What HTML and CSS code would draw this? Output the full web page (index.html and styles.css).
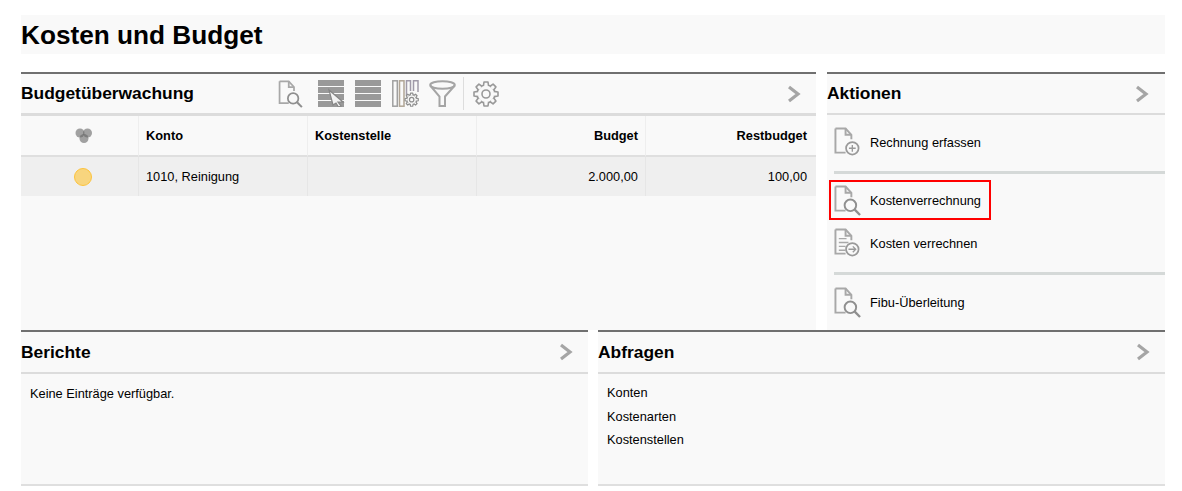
FILE: index.html
```html
<!DOCTYPE html>
<html lang="de">
<head>
<meta charset="utf-8">
<title>Kosten und Budget</title>
<link rel="stylesheet" href="styles.css">
</head>
<body>
<svg class="defs" width="0" height="0" aria-hidden="true">
  <defs>
    <g id="doc"><path d="M1.500 1.500H12L18 8V12.500M1.500 1.500V26.500H12" fill="none" stroke="#a8a8a8" stroke-width="2"/><path d="M12 1.500V8H18" fill="none" stroke="#a8a8a8" stroke-width="2"/></g>
    <g id="docfind"><use href="#doc"/><circle cx="17" cy="21" r="6" fill="#f9f9f9" stroke="#8f8f8f" stroke-width="2"/><path d="M21.500 25.500L27 31" stroke="#8f8f8f" stroke-width="2.400"/></g>
    <symbol id="chev" viewBox="0 0 14 18"><path d="M2 2L11 9L2 16" fill="none" stroke="#a5a5a5" stroke-width="3.200"/></symbol>
    <path id="tooth" d="M10.400 5L11 1H15L15.600 5" fill="#f9f9f9"/>
    <g id="cog" fill="none" stroke-linejoin="round">
      <circle cx="13" cy="13" r="9"/>
      <use href="#tooth"/>
      <use href="#tooth" transform="rotate(45 13 13)"/>
      <use href="#tooth" transform="rotate(90 13 13)"/>
      <use href="#tooth" transform="rotate(135 13 13)"/>
      <use href="#tooth" transform="rotate(180 13 13)"/>
      <use href="#tooth" transform="rotate(225 13 13)"/>
      <use href="#tooth" transform="rotate(270 13 13)"/>
      <use href="#tooth" transform="rotate(315 13 13)"/>
      <circle cx="13" cy="13" r="4"/>
    </g>
    <g id="bands" fill="#999"><rect y="0" width="26" height="6"/><rect y="7" width="26" height="6"/><rect y="14" width="26" height="6"/><rect y="21" width="26" height="6"/></g>
  </defs>
</svg>
<h1 class="page-title">Kosten und Budget</h1>
<main class="board">
  <section class="panel budget">
    <header class="panel-head head-thick">
      <h2>Budgetüberwachung</h2>
      <div class="tools">
        <svg class="ic doc-tool" width="25" height="28" viewBox="0 0 28 32"><use href="#docfind"/></svg>
        <svg class="ic rows-a" width="27" height="27" viewBox="0 0 27 27"><use href="#bands"/><path d="M11 10L25 22L20 22L23 26L20.500 27L18 23L15 25Z" fill="#f2f2f2" stroke="#858585" stroke-width="1.200"/></svg>
        <svg class="ic rows-b" width="27" height="27" viewBox="0 0 27 27"><use href="#bands"/></svg>
        <svg class="ic cols" width="27" height="27" viewBox="0 0 27 27"><g fill="none" stroke-width="1.500"><rect x=".800" y=".800" width="4.500" height="25.400" stroke="#a0a0a0"/><rect x="7.500" y=".800" width="4.500" height="25.400" stroke="#b0a595"/><path d="M14.500 15V.800H18.500V11M21.500 11V.800H26V12" stroke="#a09aa8"/></g><use href="#cog" stroke="#8f8f8f" stroke-width="2.200" transform="translate(12.500 12.500) scale(.55)"/></svg>
        <svg class="ic funnel" width="27" height="27" viewBox="0 0 27 27"><ellipse cx="13.500" cy="5" rx="12.300" ry="3.800" fill="none" stroke="#a5a5a5" stroke-width="2"/><path d="M1.200 5.500L10.500 16.500V26H16V16.500L25.800 5.500" fill="none" stroke="#a5a5a5" stroke-width="2"/></svg>
        <span class="tool-sep"></span>
        <svg class="ic gear" width="26" height="26" viewBox="0 0 26 26"><use href="#cog" stroke="#999" stroke-width="1.600"/></svg>
      </div>
      <svg class="chev" width="14" height="18"><use href="#chev"/></svg>
    </header>
    <div class="grid-table">
      <div class="cell th status"><svg width="18" height="16" viewBox="0 0 18 16"><g fill="#666" fill-opacity=".6"><circle cx="5" cy="5" r="4.500"/><circle cx="12.500" cy="5" r="4.500"/><circle cx="9" cy="10.500" r="4.500"/></g></svg></div>
      <div class="cell th">Konto</div>
      <div class="cell th">Kostenstelle</div>
      <div class="cell th num">Budget</div>
      <div class="cell th num last">Restbudget</div>
      <div class="cell td status"><span class="dot"></span></div>
      <div class="cell td">1010, Reinigung</div>
      <div class="cell td"></div>
      <div class="cell td num">2.000,00</div>
      <div class="cell td num last">100,00</div>
    </div>
  </section>

  <section class="panel actions">
    <header class="panel-head">
      <h2>Aktionen</h2>
      <svg class="chev" width="14" height="18"><use href="#chev"/></svg>
    </header>
    <ul class="action-list">
      <li class="action"><svg width="27" height="31" viewBox="0 0 28 32"><use href="#doc"/><circle cx="19" cy="22" r="6.500" fill="#f9f9f9" stroke="#9a9a9a" stroke-width="1.800"/><path d="M15.500 22H22.500M19 18.500V25.500" stroke="#9a9a9a" stroke-width="1.400"/></svg><span>Rechnung erfassen</span></li>
      <li class="rule"></li>
      <li class="action boxed"><svg width="27" height="31" viewBox="0 0 28 32"><use href="#docfind"/></svg><span>Kostenverrechnung</span></li>
      <li class="action"><svg width="27" height="31" viewBox="0 0 28 32"><use href="#doc"/><path d="M5 11H13M5 15H15M5 19H12M5 23H12" stroke="#a8a8a8" stroke-width="1.400"/><circle cx="19" cy="22" r="6.500" fill="#f9f9f9" stroke="#9a9a9a" stroke-width="1.800"/><path d="M15 22H22M19.500 19L22.500 22L19.500 25" fill="none" stroke="#9a9a9a" stroke-width="1.400"/></svg><span>Kosten verrechnen</span></li>
      <li class="rule rule-b"></li>
      <li class="action"><svg width="27" height="31" viewBox="0 0 28 32"><use href="#docfind"/></svg><span>Fibu-Überleitung</span></li>
    </ul>
  </section>

  <div class="lower">
    <section class="panel">
      <header class="panel-head">
        <h2>Berichte</h2>
        <svg class="chev" width="14" height="18"><use href="#chev"/></svg>
      </header>
      <p class="empty">Keine Einträge verfügbar.</p>
    </section>
    <section class="panel">
      <header class="panel-head">
        <h2>Abfragen</h2>
        <svg class="chev" width="14" height="18"><use href="#chev"/></svg>
      </header>
      <ul class="links">
        <li>Konten</li>
        <li>Kostenarten</li>
        <li>Kostenstellen</li>
      </ul>
    </section>
  </div>
</main>
</body>
</html>
```
FILE: styles.css
```css
* { box-sizing: border-box; }
html, body { margin: 0; background: #fff; }
body {
  padding: 15px 17px 0 21px;
  font-family: "Liberation Sans", Arial, sans-serif;
  font-size: 12.8px;
  color: #000;
  height: 491px;
  overflow: hidden;
}
.defs { position: absolute; }
.page-title {
  margin: 0 0 18px;
  height: 39px;
  background: #f9f9f9;
  font-size: 26.2px;
  line-height: 41px;
  font-weight: bold;
}
.board {
  display: grid;
  grid-template-columns: 795px 338px;
  column-gap: 11px;
  grid-template-rows: 258px 156px;
}
.panel {
  background: #f9f9f9;
  border-top: 2px solid #707070;
}
.panel-head {
  display: flex;
  align-items: center;
  height: 41px;
  border-bottom: 2px solid #dcdcdc;
}
.head-thick { height: 42px; border-bottom-width: 3px; }
.panel-head h2 {
  margin: 0;
  font-size: 17.4px;
  font-weight: bold;
  line-height: 20px;
}
.head-thick h2, .actions h2 { margin-top: -2px; }
.chev { margin-left: auto; margin-right: 15px; flex: none; }
.actions .chev { margin-right: 16px; }
.tools {
  display: flex;
  align-items: center;
  margin-left: 84px;
}
.ic { flex: none; }
.doc-tool { margin-right: 15px; }
.rows-a { margin-right: 10px; }
.rows-b { margin-right: 10px; }
.cols { margin-right: 10px; }
.funnel { margin-right: 7px; }
.tool-sep { width: 1px; height: 33px; background: #ddd; margin-right: 9px; }
.grid-table {
  display: grid;
  grid-template-columns: 118px 169px 169px 169px 170px;
  grid-template-rows: 41px 39px;
}
.cell {
  display: flex;
  align-items: center;
  padding: 0 7px;
  border-right: 1px solid #eee;
}
.cell.last { border-right: 0; padding-right: 9px; }
.th { font-weight: bold; border-bottom: 2px solid #dfdfdf; }
.td { background: #efefef; border-right-color: #e6e6e6; }
.num { justify-content: flex-end; }
.status { justify-content: center; padding: 0 0 0 6px; }
.th.status { padding-left: 8px; }
.dot {
  width: 18px;
  height: 18px;
  border-radius: 50%;
  background: #f8d57e;
  border: 1.500px solid #fdc33c;
}
.actions { min-width: 0; }
.action-list { list-style: none; margin: 0; padding: 6px 0 0; }
.action {
  display: flex;
  align-items: center;
  height: 43px;
  padding-left: 7px;
  gap: 9px;
}
.action svg { flex: none; }
.rule { height: 3px; margin: 7px 0 6px 7px; background: #d5d9d8; }
.rule-b { margin: 7px 0 6px 7px; }
.boxed {
  border: 2px solid #f00;
  width: 162px;
  height: 40px;
  margin: 0 0 2px 2px;
  padding-left: 3px;
}
.lower {
  grid-column: 1 / -1;
  display: grid;
  grid-template-columns: 567px 567px;
  column-gap: 10px;
  height: 156px;
}
.lower .panel { border-bottom: 2px solid #dfdfdf; }
.lower .panel-head { height: 42px; }
.empty { margin: 0; padding: 12px 9px; line-height: 16px; }
.links { list-style: none; margin: 0; padding: 11px 9px; }
.links li { line-height: 16px; margin-bottom: 7.500px; }
```
